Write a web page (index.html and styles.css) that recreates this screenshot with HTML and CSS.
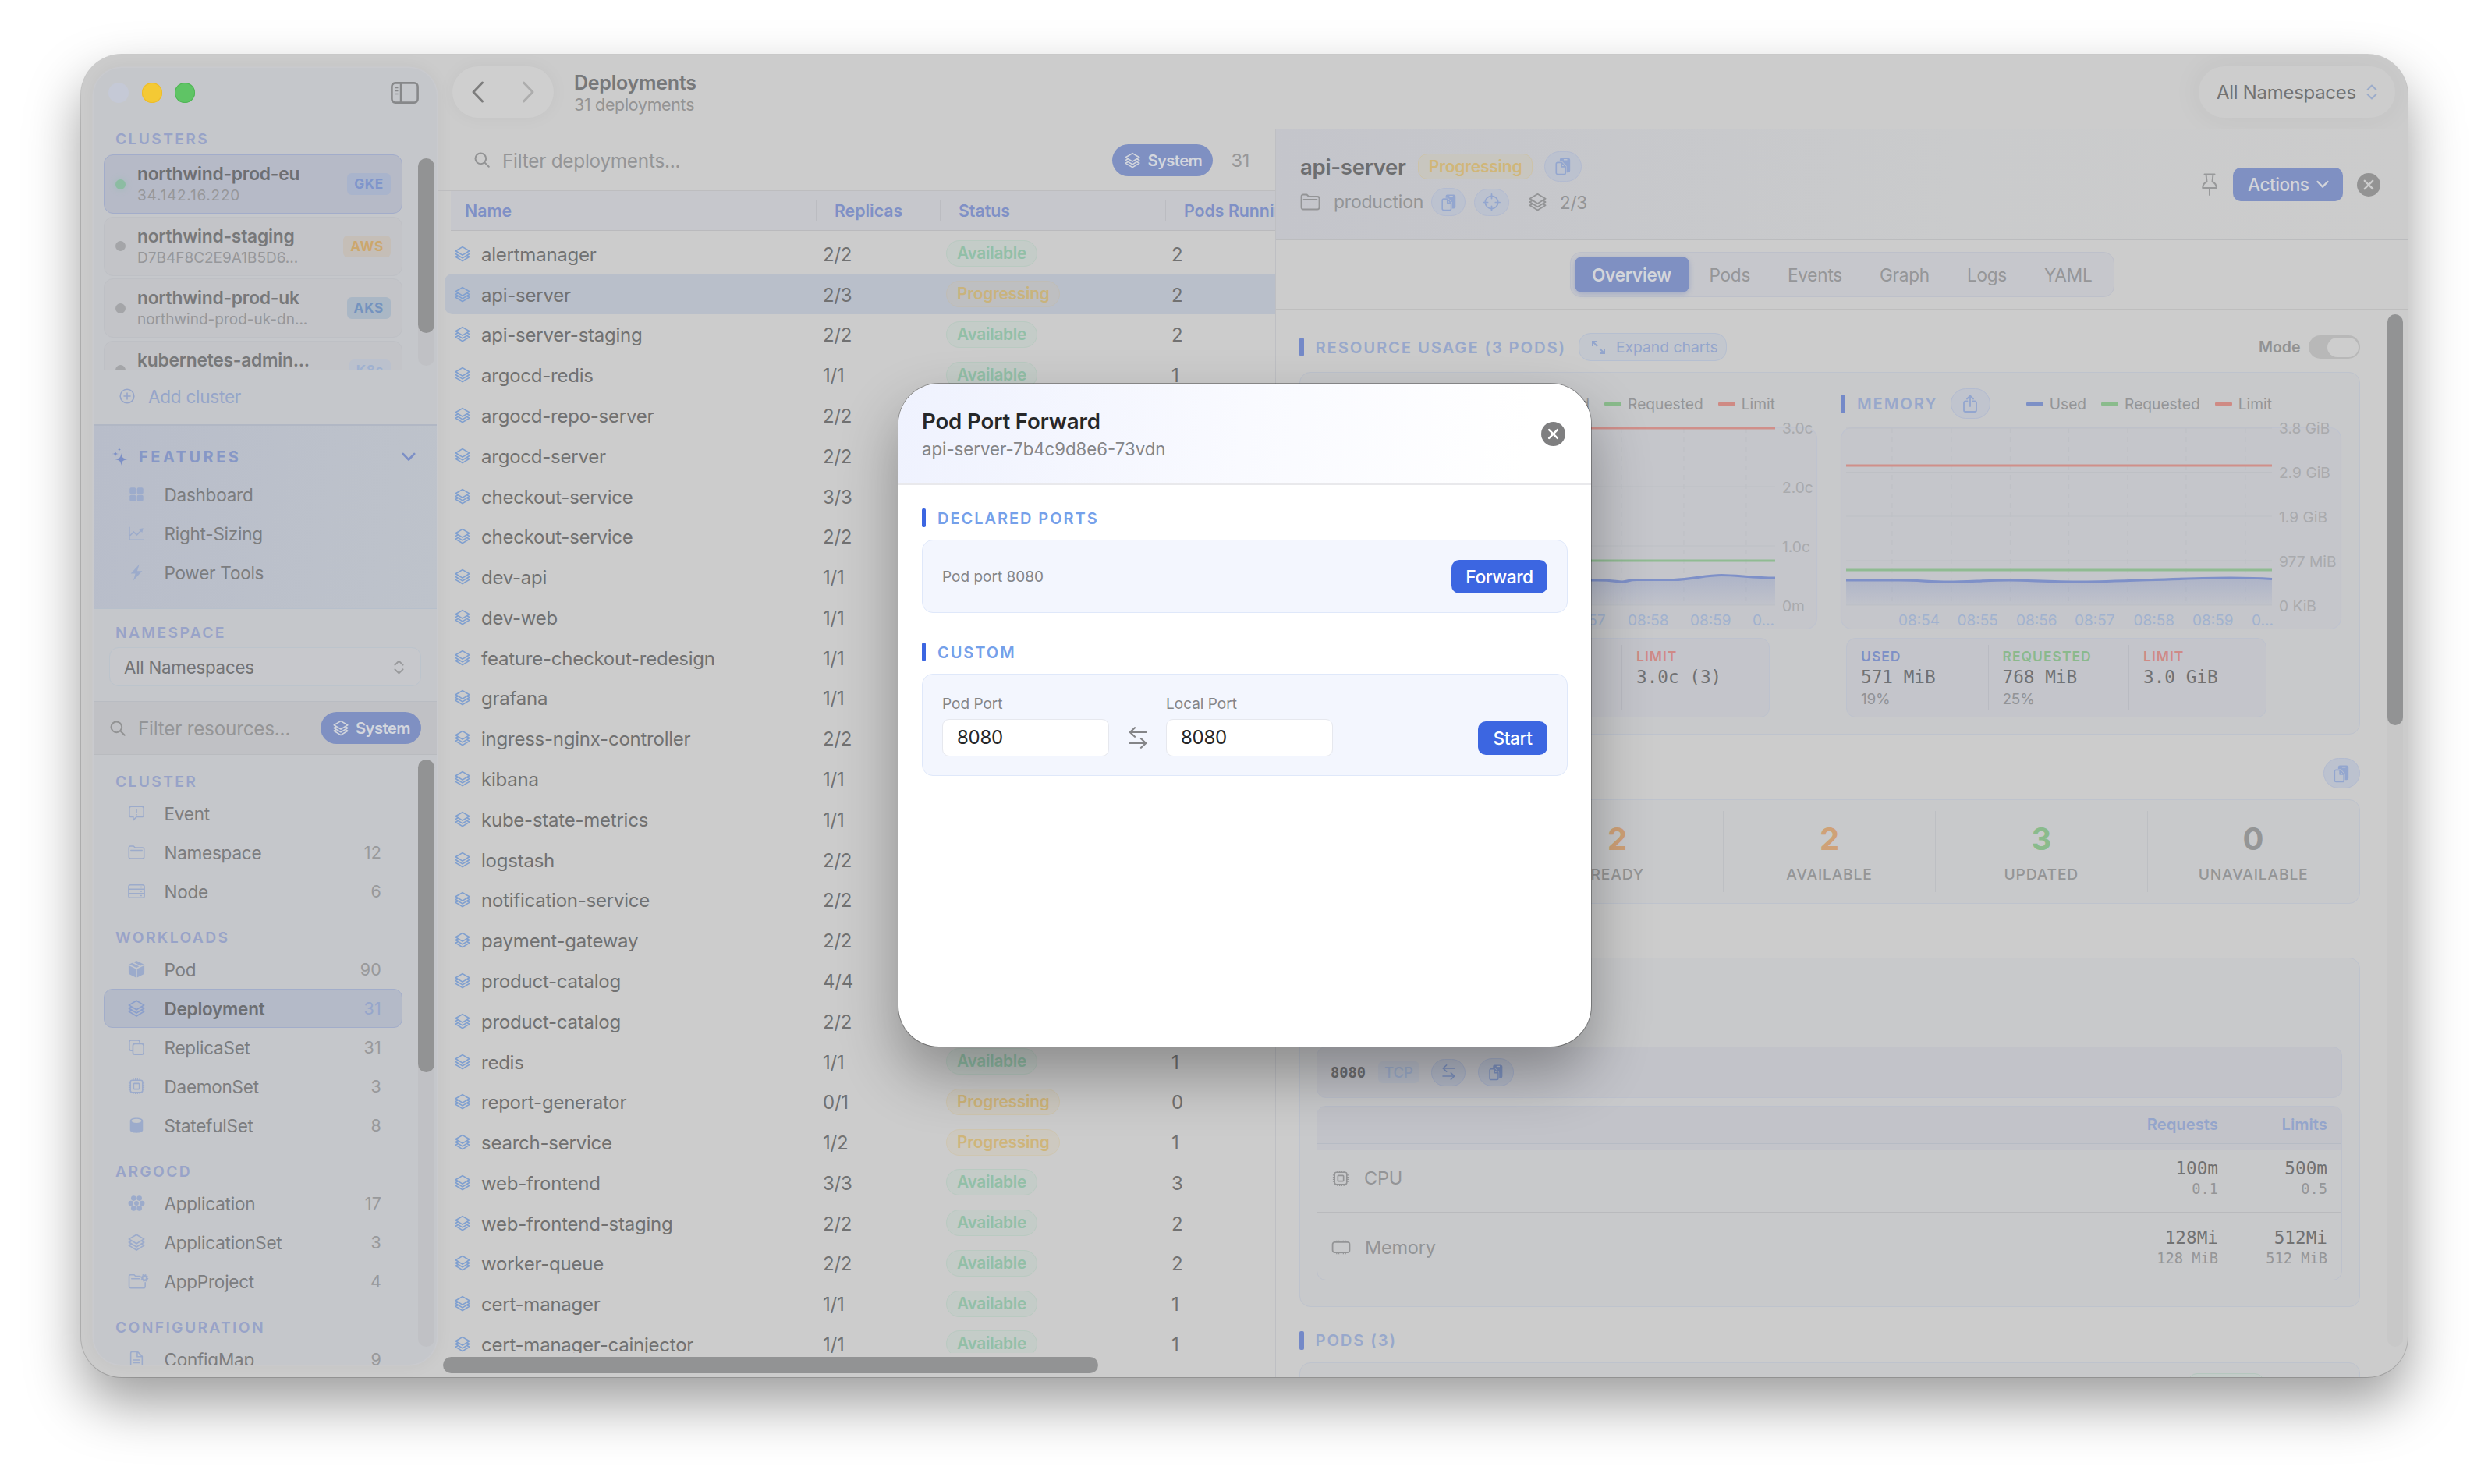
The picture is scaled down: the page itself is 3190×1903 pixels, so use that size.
FILE: index.html
```html
<!DOCTYPE html>
<html lang="en">
<head>
<meta charset="utf-8">
<title>Deployments</title>
<link rel="stylesheet" href="styles.css">
</head>
<body>
<svg class="defs" width="0" height="0" aria-hidden="true">
  <symbol id="layers" viewBox="0 0 24 24"><g fill="none" stroke="currentColor" stroke-width="1.900" stroke-linejoin="round" stroke-linecap="round"><path d="M12 1.300 22.500 7.500 12 14 1.500 7.500Z"/><path d="M4.500 10.300 1.500 12 12 18.500 22.500 12l-3-1.700"/><path d="M4.500 14.800 1.500 16.500 12 23 22.500 16.500l-3-1.700"/></g></symbol>
  <symbol id="search" viewBox="0 0 24 24"><g fill="none" stroke="currentColor" stroke-width="2.400" stroke-linecap="round"><circle cx="10" cy="10" r="8.200"/><path d="m16 16 6.500 6.500"/></g></symbol>
  <symbol id="updown" viewBox="0 0 14 20"><path d="M1.500 7 7 1.500 12.500 7M1.500 13 7 18.500 12.500 13" fill="none" stroke="currentColor" stroke-width="2" stroke-linecap="round" stroke-linejoin="round"/></symbol>
  <symbol id="copy" viewBox="0 0 24 26"><path d="M10 1.500h9a3 3 0 0 1 3 3V19a3 3 0 0 1-3 3h-2V13l-6-6.500H7.500V4a2.500 2.500 0 0 1 2.500-2.500Z" fill="currentColor"/><path d="M13 4h5" stroke="#bcc3d1" stroke-width="1.600"/><path d="M4.500 8H10l5.500 6v8.500a2 2 0 0 1-2 2h-9a2 2 0 0 1-2-2V10a2 2 0 0 1 2-2ZM10 8v6h5.500" fill="none" stroke="currentColor" stroke-width="1.800" stroke-linejoin="round"/></symbol>
  <symbol id="folder" viewBox="0 0 26 22"><path d="M1.500 18V4a2.500 2.500 0 0 1 2.500-2.500h4.500L11 4h11a2.500 2.500 0 0 1 2.500 2.500V18a2.500 2.500 0 0 1-2.500 2.500H4A2.500 2.500 0 0 1 1.500 18ZM4.500 8h17" fill="none" stroke="currentColor" stroke-width="1.800" stroke-linecap="round" stroke-linejoin="round"/></symbol>
  <symbol id="swap" viewBox="0 0 24 28"><path d="M22.500 7H2M8 1.200 1.800 7 8 12.800M1.500 21H22M16 15.200 22.200 21 16 26.800" fill="none" stroke="currentColor" stroke-width="2.200" stroke-linecap="round" stroke-linejoin="round"/></symbol>
  <symbol id="chip" viewBox="0 0 24 24"><g fill="none" stroke="currentColor" stroke-width="1.800"><rect x="3.500" y="3.500" width="17" height="17" rx="2.500"/><rect x="8" y="8" width="8" height="8" rx="1"/><path d="M7.500 1v2.500M10.500 1v2.500M13.500 1v2.500M16.500 1v2.500M7.500 20.500V23M10.500 20.500V23M13.500 20.500V23M16.500 20.500V23M1 7.500h2.500M1 10.500h2.500M1 13.500h2.500M1 16.500h2.500M20.500 7.500H23M20.500 10.500H23M20.500 13.500H23M20.500 16.500H23" stroke-width="1.300"/></g></symbol>
  <symbol id="memory" viewBox="0 0 26 20"><rect x="1.500" y="3" width="23" height="14" rx="3" fill="none" stroke="currentColor" stroke-width="1.900"/><path d="M7 .8V3M10 .8V3M13 .8V3M16 .8V3M19 .8V3M7 17v2.200M10 17v2.200M13 17v2.200M16 17v2.200M19 17v2.200" stroke="currentColor" stroke-width="1.300"/></symbol>
  <symbol id="target" viewBox="0 0 24 24"><g fill="none" stroke="currentColor" stroke-width="1.800" stroke-linecap="round"><circle cx="12" cy="12" r="8.500"/><path d="M12 .9v6M12 17v6M.9 12h6M17 12h6"/></g></symbol>
  <symbol id="close" viewBox="0 0 30 30"><circle cx="15" cy="15" r="15" fill="currentColor"/><path d="m9.800 9.800 10.400 10.400M20.200 9.800 9.800 20.200" stroke="var(--x, #cccccc)" stroke-width="2.400" stroke-linecap="round"/></symbol>
  <symbol id="down" viewBox="0 0 18 12"><path d="m1.800 2 7.200 7.500L16.200 2" fill="none" stroke="currentColor" stroke-width="2.600" stroke-linecap="round" stroke-linejoin="round"/></symbol>
</svg>

<div class="window">
  <aside class="sidebar">
    <div class="titlebar">
      <i class="light light-close"></i><i class="light light-min"></i><i class="light light-max"></i>
      <svg class="toggle-icon" viewBox="0 0 36 28"><rect x="1.400" y="1.400" width="33.200" height="25.200" rx="4.500" fill="none" stroke="currentColor" stroke-width="2.600"/><path d="M13 1v26" stroke="currentColor" stroke-width="2.400"/><path d="M5 7.500h4.500M5 11.500h4.500M5 15.500h4.500" stroke="currentColor" stroke-width="1.500"/></svg>
    </div>
    <h6 class="group-label clusters-label">CLUSTERS</h6>
    <div class="cluster-area">
      <div class="cluster-list">
        <div class="cluster is-active"><i class="dot"></i><div class="cluster-text"><b>northwind-prod-eu</b><span class="ip">34.142.16.220</span></div><em class="tag tag-gke">GKE</em></div>
        <div class="cluster"><i class="dot"></i><div class="cluster-text"><b>northwind-staging</b><span>D7B4F8C2E9A1B5D6...</span></div><em class="tag tag-aws">AWS</em></div>
        <div class="cluster"><i class="dot"></i><div class="cluster-text"><b>northwind-prod-uk</b><span>northwind-prod-uk-dn...</span></div><em class="tag tag-aks">AKS</em></div>
        <div class="cluster"><i class="dot"></i><div class="cluster-text"><b>kubernetes-admin...</b><span>&nbsp;</span></div><em class="tag tag-k8s">K8s</em></div>
      </div>
      <div class="track cluster-track"><div class="thumb cluster-thumb"></div></div>
    </div>
    <div class="add-cluster"><svg viewBox="0 0 20 20" width="20" height="20"><g fill="none" stroke="currentColor" stroke-width="1.600" stroke-linecap="round"><circle cx="10" cy="10" r="8.800"/><path d="M10 6v8M6 10h8"/></g></svg><span>Add cluster</span></div>

    <section class="features">
      <div class="features-head">
        <svg viewBox="0 0 20 24" width="20" height="24" fill="currentColor"><path d="M11.500 7c.8 5.500 2 7 8 8-6 1-7.200 2.500-8 8-.8-5.500-2-7-8-8 6-1 7.200-2.500 8-8ZM4 4.500C4.400 7 5 7.600 8 8c-3 .4-3.600 1-4 3.500C3.600 9 3 8.400 0 8c3-.4 3.600-1 4-3.500ZM9 .300c.2 1.500.5 1.900 2.200 2.200C9.500 2.800 9.200 3.200 9 4.700 8.800 3.200 8.500 2.800 6.800 2.500 8.500 2.200 8.800 1.800 9 .300Z"/></svg>
        <span>FEATURES</span>
        <svg class="features-chev" width="18" height="12"><use href="#down"/></svg>
      </div>
      <div class="nav-row"><svg class="nav-icon" viewBox="0 0 24 24" fill="currentColor"><rect x="2.500" y="2.500" width="8.700" height="8.700" rx="2"/><rect x="12.800" y="2.500" width="8.700" height="8.700" rx="2"/><rect x="2.500" y="12.800" width="8.700" height="8.700" rx="2"/><rect x="12.800" y="12.800" width="8.700" height="8.700" rx="2"/></svg><span>Dashboard</span></div>
      <div class="nav-row"><svg class="nav-icon" viewBox="0 0 24 24"><path d="M2 3v18h20M3 15l5-5 4.500 4L19 7.500" fill="none" stroke="currentColor" stroke-width="1.800"/><path d="m15 6 6.500-1.500L20 11Z" fill="currentColor"/></svg><span>Right-Sizing</span></div>
      <div class="nav-row"><svg class="nav-icon" viewBox="0 0 24 24" fill="currentColor"><path d="M16 .5 4 13.500h6.500L7.500 23.500 20 10h-7Z"/></svg><span>Power Tools</span></div>
    </section>

    <section class="namespace">
      <h6 class="group-label">NAMESPACE</h6>
      <div class="select"><span>All Namespaces</span><svg width="13" height="19"><use href="#updown"/></svg></div>
    </section>

    <div class="resource-filter">
      <svg class="gray-icon" width="20" height="20"><use href="#search"/></svg>
      <span class="placeholder">Filter resources...</span>
      <span class="system-pill"><svg width="20" height="21"><use href="#layers"/></svg>System</span>
    </div>

    <div class="nav-area">
      <nav class="nav-list">
        <h6 class="group-label">CLUSTER</h6>
        <div class="nav-row"><svg class="nav-icon" viewBox="0 0 24 24"><path d="M4.500 2.500h15a2.500 2.500 0 0 1 2.500 2.500v9.500a2.500 2.500 0 0 1-2.500 2.500H12l-4.500 4.500V17h-3A2.500 2.500 0 0 1 2 14.500V5a2.500 2.500 0 0 1 2.500-2.500ZM12 5.800v5.400M12 13v1.800" fill="none" stroke="currentColor" stroke-width="1.700" stroke-linejoin="round"/></svg><span>Event</span></div>
        <div class="nav-row"><svg class="nav-icon"><use href="#folder"/></svg><span>Namespace</span><small>12</small></div>
        <div class="nav-row"><svg class="nav-icon" viewBox="0 0 24 24"><g fill="none" stroke="currentColor" stroke-width="1.700"><rect x="1" y="3" width="22" height="18" rx="2.500"/><path d="M1 9h22M1 15h22"/></g><path d="M17 6h2.500M17 12h2.500M17 18h2.500" stroke="currentColor" stroke-width="1.700"/></svg><span>Node</span><small>6</small></div>
        <h6 class="group-label">WORKLOADS</h6>
        <div class="nav-row"><svg class="nav-icon" viewBox="0 0 24 24" fill="currentColor"><path d="m1 6.500 10.200 5V23.500L2.500 19A2.500 2.500 0 0 1 1 16.500ZM23 6.500l-10.200 5V23.500L21.500 19a2.500 2.500 0 0 0 1.500-2.500ZM2 5 5.800 3l9.900 4.900L12 9.900ZM7.800 2 12 0l10 5-4.300 2Z"/></svg><span>Pod</span><small>90</small></div>
        <div class="nav-row is-active"><svg class="nav-icon"><use href="#layers"/></svg><span>Deployment</span><small>31</small></div>
        <div class="nav-row"><svg class="nav-icon" viewBox="0 0 24 24"><g fill="none" stroke="currentColor" stroke-width="1.800"><rect x="7" y="7" width="15" height="15" rx="3"/><path d="M7 16.500H4.500A2.500 2.500 0 0 1 2 14V4.500A2.500 2.500 0 0 1 4.500 2H14a2.500 2.500 0 0 1 2.500 2.500V7"/></g></svg><span>ReplicaSet</span><small>31</small></div>
        <div class="nav-row"><svg class="nav-icon"><use href="#chip"/></svg><span>DaemonSet</span><small>3</small></div>
        <div class="nav-row"><svg class="nav-icon" viewBox="0 0 24 24"><path d="M3 5.500v13C3 21 6.500 22.500 12 22.500s9-1.500 9-4v-13C21 3 17.500 1.500 12 1.500S3 3 3 5.500Z" fill="currentColor"/><ellipse cx="12" cy="5.800" rx="7" ry="2.800" fill="#c5c7cb"/></svg><span>StatefulSet</span><small>8</small></div>
        <h6 class="group-label">ARGOCD</h6>
        <div class="nav-row"><svg class="nav-icon" viewBox="0 0 24 24" fill="currentColor"><circle cx="12" cy="12" r="3.200"/><circle cx="4.200" cy="12" r="3.600"/><circle cx="19.800" cy="12" r="3.600"/><circle cx="8" cy="5" r="3.600"/><circle cx="16" cy="5" r="3.600"/><circle cx="8" cy="19" r="3.600"/><circle cx="16" cy="19" r="3.600"/></svg><span>Application</span><small>17</small></div>
        <div class="nav-row"><svg class="nav-icon"><use href="#layers"/></svg><span>ApplicationSet</span><small>3</small></div>
        <div class="nav-row"><svg class="nav-icon nav-icon-wide" viewBox="0 0 28 24"><path d="M17 5H10.500L8.500 3H3.500A2 2 0 0 0 1.500 5v14a2.500 2.500 0 0 0 2.500 2.500h17.500a2.500 2.500 0 0 0 2.500-2.500v-5M5 8.500h11" fill="none" stroke="currentColor" stroke-width="1.700" stroke-linecap="round"/><circle cx="23" cy="7.500" r="3.200" fill="none" stroke="currentColor" stroke-width="2.600"/><circle cx="23" cy="7.500" r="4.800" fill="none" stroke="currentColor" stroke-width="1.200" stroke-dasharray="1.900 1.870"/></svg><span>AppProject</span><small>4</small></div>
        <h6 class="group-label">CONFIGURATION</h6>
        <div class="nav-row"><svg class="nav-icon" viewBox="0 0 24 24"><path d="M6 1.500h7.500L20 8v12a2.500 2.500 0 0 1-2.500 2.500h-11A2.500 2.500 0 0 1 4 20V3.500a2 2 0 0 1 2-2ZM13 2v6.500h7M7.500 13h9M7.500 17h9" fill="none" stroke="currentColor" stroke-width="1.700"/></svg><span>ConfigMap</span><small>9</small></div>
      </nav>
      <div class="track nav-track"><div class="thumb nav-thumb"></div></div>
    </div>
  </aside>

  <main class="main">
    <header class="toolbar">
      <div class="history">
        <svg width="17" height="28" viewBox="0 0 17 28"><path d="M14.500 2 3 14l11.500 12" fill="none" stroke="#7d7d7d" stroke-width="3" stroke-linecap="round" stroke-linejoin="round"/></svg>
        <svg width="17" height="28" viewBox="0 0 17 28"><path d="M2.500 2 14 14 2.500 26" fill="none" stroke="#adadad" stroke-width="3" stroke-linecap="round" stroke-linejoin="round"/></svg>
      </div>
      <div class="heading"><h1>Deployments</h1><p>31 deployments</p></div>
      <div class="ns-picker"><span>All Namespaces</span><svg width="14" height="20"><use href="#updown"/></svg></div>
    </header>

    <div class="panes">
      <section class="list-pane">
        <div class="list-filter">
          <svg class="gray-icon" width="20" height="20"><use href="#search"/></svg>
          <span class="placeholder">Filter deployments...</span>
          <span class="system-pill"><svg width="20" height="21"><use href="#layers"/></svg>System</span>
          <span class="list-count">31</span>
        </div>
        <div class="columns"><span>Name</span><span>Replicas</span><span>Status</span><span>Pods Running</span></div>
        <div class="rows">
          <div class="row"><svg><use href="#layers"/></svg><span>alertmanager</span><span>2/2</span><em>Available</em><span>2</span></div>
          <div class="row is-active"><svg><use href="#layers"/></svg><span>api-server</span><span>2/3</span><em class="warn">Progressing</em><span>2</span></div>
          <div class="row"><svg><use href="#layers"/></svg><span>api-server-staging</span><span>2/2</span><em>Available</em><span>2</span></div>
          <div class="row"><svg><use href="#layers"/></svg><span>argocd-redis</span><span>1/1</span><em>Available</em><span>1</span></div>
          <div class="row"><svg><use href="#layers"/></svg><span>argocd-repo-server</span><span>2/2</span><em>Available</em><span>2</span></div>
          <div class="row"><svg><use href="#layers"/></svg><span>argocd-server</span><span>2/2</span><em>Available</em><span>2</span></div>
          <div class="row"><svg><use href="#layers"/></svg><span>checkout-service</span><span>3/3</span><em>Available</em><span>3</span></div>
          <div class="row"><svg><use href="#layers"/></svg><span>checkout-service</span><span>2/2</span><em>Available</em><span>2</span></div>
          <div class="row"><svg><use href="#layers"/></svg><span>dev-api</span><span>1/1</span><em>Available</em><span>1</span></div>
          <div class="row"><svg><use href="#layers"/></svg><span>dev-web</span><span>1/1</span><em>Available</em><span>1</span></div>
          <div class="row"><svg><use href="#layers"/></svg><span>feature-checkout-redesign</span><span>1/1</span><em>Available</em><span>1</span></div>
          <div class="row"><svg><use href="#layers"/></svg><span>grafana</span><span>1/1</span><em>Available</em><span>1</span></div>
          <div class="row"><svg><use href="#layers"/></svg><span>ingress-nginx-controller</span><span>2/2</span><em>Available</em><span>2</span></div>
          <div class="row"><svg><use href="#layers"/></svg><span>kibana</span><span>1/1</span><em>Available</em><span>1</span></div>
          <div class="row"><svg><use href="#layers"/></svg><span>kube-state-metrics</span><span>1/1</span><em>Available</em><span>1</span></div>
          <div class="row"><svg><use href="#layers"/></svg><span>logstash</span><span>2/2</span><em>Available</em><span>2</span></div>
          <div class="row"><svg><use href="#layers"/></svg><span>notification-service</span><span>2/2</span><em>Available</em><span>2</span></div>
          <div class="row"><svg><use href="#layers"/></svg><span>payment-gateway</span><span>2/2</span><em>Available</em><span>2</span></div>
          <div class="row"><svg><use href="#layers"/></svg><span>product-catalog</span><span>4/4</span><em>Available</em><span>4</span></div>
          <div class="row"><svg><use href="#layers"/></svg><span>product-catalog</span><span>2/2</span><em>Available</em><span>2</span></div>
          <div class="row"><svg><use href="#layers"/></svg><span>redis</span><span>1/1</span><em>Available</em><span>1</span></div>
          <div class="row"><svg><use href="#layers"/></svg><span>report-generator</span><span>0/1</span><em class="warn">Progressing</em><span>0</span></div>
          <div class="row"><svg><use href="#layers"/></svg><span>search-service</span><span>1/2</span><em class="warn">Progressing</em><span>1</span></div>
          <div class="row"><svg><use href="#layers"/></svg><span>web-frontend</span><span>3/3</span><em>Available</em><span>3</span></div>
          <div class="row"><svg><use href="#layers"/></svg><span>web-frontend-staging</span><span>2/2</span><em>Available</em><span>2</span></div>
          <div class="row"><svg><use href="#layers"/></svg><span>worker-queue</span><span>2/2</span><em>Available</em><span>2</span></div>
          <div class="row"><svg><use href="#layers"/></svg><span>cert-manager</span><span>1/1</span><em>Available</em><span>1</span></div>
          <div class="row"><svg><use href="#layers"/></svg><span>cert-manager-cainjector</span><span>1/1</span><em>Available</em><span>1</span></div>
        </div>
        <div class="h-scroll"><div class="thumb h-thumb"></div></div>
      </section>

      <section class="detail">
        <header class="detail-head">
          <div class="detail-info">
            <div class="detail-title"><h2>api-server</h2><em class="status-pill">Progressing</em><span class="round round-lg"><svg width="22" height="24"><use href="#copy"/></svg></span></div>
            <div class="detail-meta">
              <svg width="26" height="22"><use href="#folder"/></svg><span class="meta-ns">production</span>
              <span class="round round-copy"><svg width="21" height="23"><use href="#copy"/></svg></span>
              <span class="round round-target"><svg width="23" height="23"><use href="#target"/></svg></span>
              <svg class="meta-layers" width="23" height="24"><use href="#layers"/></svg><span class="meta-count">2/3</span>
            </div>
          </div>
          <svg class="pin" viewBox="0 0 20 29" width="20" height="29"><path d="M3.500 1.500h13M5.500 1.500l1 9.500C3 12.500 1.300 15 1.200 19h17.600c-.1-4-1.800-6.500-5.300-8l1-9.500M10 19v9" fill="none" stroke="currentColor" stroke-width="2" stroke-linecap="round" stroke-linejoin="round"/></svg>
          <span class="actions">Actions<svg width="16" height="11"><use href="#down"/></svg></span>
          <svg class="detail-close" width="30" height="30"><use href="#close"/></svg>
        </header>
        <div class="tabs-bar"><div class="tabs"><b>Overview</b><span>Pods</span><span>Events</span><span>Graph</span><span>Logs</span><span>YAML</span></div></div>
        <div class="detail-scroll">
          <div class="detail-body">
            <div class="sec sec-usage"><i class="bar"></i><h3>RESOURCE USAGE (3 PODS)</h3>
              <span class="expand"><svg width="19" height="19" viewBox="0 0 19 19"><path d="M2 8V2h6M2 2l6 6M17 11v6h-6M17 17l-6-6" fill="none" stroke="currentColor" stroke-width="2"/></svg>Expand charts</span>
              <span class="mode">Mode</span><span class="switch"><i></i></span>
            </div>
            <div class="card charts">
              <div class="chart-col">
                <div class="chart-head"><i class="bar"></i><h3>CPU</h3><span class="round round-share"></span>
                  <ul class="legend"><li class="c-used">Used</li><li class="c-req">Requested</li><li class="c-lim">Limit</li></ul></div>
                <svg class="chart" viewBox="0 0 642 259" width="642" height="259">
                  <defs><linearGradient id="fade" x1="0" y1="0" x2="0" y2="1"><stop offset="0" stop-color="#7f90c2" stop-opacity=".34"/><stop offset="1" stop-color="#7f90c2" stop-opacity=".06"/></linearGradient></defs>
                  <rect class="frame" x=".5" y=".5" width="641" height="258" rx="14"/>
                  <g class="grid"><path d="M7 1h581M7 76h581M7 152h581M7 228h581"/></g>
                  <path class="gridv" d="M71 1v227M151 1v227M231 1v227M311 1v227M391 1v227M471 1v227M551 1v227"/>
                  <path d="M7 196H360C380 196 385 198 392 198S400 195.500 410 195.500H458C480 195 500 189.500 519 189.500S560 193 588 193V228H7Z" fill="url(#fade)"/>
                  <path class="l-lim" d="M7 1h581"/><path class="l-req" d="M7 171h581"/>
                  <path class="l-used" d="M7 196H360C380 196 385 198 392 198S400 195.500 410 195.500H458C480 195 500 189.500 519 189.500S560 193 588 193"/>
                  <g class="ylab"><text x="597" y="8">3.0c</text><text x="597" y="83.500">2.0c</text><text x="597" y="159.500">1.0c</text><text x="597" y="235.500">0m</text></g>
                  <g class="xlab"><text x="319" y="254">08:57</text><text x="399" y="254">08:58</text><text x="479" y="254">08:59</text><text x="559" y="254">0...</text></g>
                </svg>
                <div class="stats stats-cpu"><div><h4 class="t-used">USED</h4><b>0.4c</b><small>14%</small></div><div><h4 class="t-req">REQUESTED</h4><b>0.8c (.75)</b></div><div><h4 class="t-lim">LIMIT</h4><b>3.0c (3)</b></div></div>
              </div>
              <div class="chart-col">
                <div class="chart-head"><i class="bar"></i><h3>MEMORY</h3><span class="round round-share"><svg width="20" height="24" viewBox="0 0 20 24"><path d="M6.500 8.500H4a2 2 0 0 0-2 2V20a2 2 0 0 0 2 2h12a2 2 0 0 0 2-2v-9.500a2 2 0 0 0-2-2h-2.500M10 15V1.500M6 5.500l4-4 4 4" fill="none" stroke="currentColor" stroke-width="1.800" stroke-linecap="round" stroke-linejoin="round"/></svg></span>
                  <ul class="legend"><li class="c-used">Used</li><li class="c-req">Requested</li><li class="c-lim">Limit</li></ul></div>
                <svg class="chart" viewBox="0 0 642 259" width="642" height="259">
                  <rect class="frame" x=".5" y=".5" width="641" height="258" rx="14"/>
                  <g class="grid"><path d="M7 1h546M7 57.500h546M7 114h546M7 171h546M7 228h546"/></g>
                  <path class="gridv" d="M66 1v227M142 1v227M217.500 1v227M292.500 1v227M368 1v227M443 1v227M519 1v227"/>
                  <path d="M7 196H75C100 196 115 198 138 198S190 196 216 196 265 198 310 198 440 193 500 193Q530 193 553 194.500V228H7Z" fill="url(#fade)"/>
                  <path class="l-lim" d="M7 49h546"/><path class="l-req" d="M7 183h546"/>
                  <path class="l-used" d="M7 196H75C100 196 115 198 138 198S190 196 216 196 265 198 310 198 440 193 500 193Q530 193 553 194.500"/>
                  <g class="ylab"><text x="562" y="8">3.8 GiB</text><text x="562" y="64.500">2.9 GiB</text><text x="562" y="121.500">1.9 GiB</text><text x="562" y="178.500">977 MiB</text><text x="562" y="235.500">0 KiB</text></g>
                  <g class="xlab"><text x="74" y="254">08:54</text><text x="149.500" y="254">08:55</text><text x="225" y="254">08:56</text><text x="300" y="254">08:57</text><text x="375.500" y="254">08:58</text><text x="451" y="254">08:59</text><text x="527" y="254">0...</text></g>
                </svg>
                <div class="stats"><div><h4 class="t-used">USED</h4><b>571 MiB</b><small>19%</small></div><div><h4 class="t-req">REQUESTED</h4><b>768 MiB</b><small>25%</small></div><div><h4 class="t-lim">LIMIT</h4><b>3.0 GiB</b></div></div>
              </div>
            </div>

            <div class="sec sec-status"><i class="bar"></i><h3>STATUS</h3><span class="round round-status"><svg width="22" height="24"><use href="#copy"/></svg></span></div>
            <div class="card counts">
              <div><b class="n-green">3</b><span>DESIRED</span></div><div><b class="n-orange">2</b><span>READY</span></div><div><b class="n-orange">2</b><span>AVAILABLE</span></div><div><b class="n-green">3</b><span>UPDATED</span></div><div><b>0</b><span>UNAVAILABLE</span></div>
            </div>

            <div class="sec sec-containers"><i class="bar"></i><h3>CONTAINERS</h3></div>
            <div class="card container-card">
              <div class="port"><b>8080</b><span class="tcp">TCP</span><span class="round round-swap"><svg width="19" height="20"><use href="#swap"/></svg></span><span class="round round-port"><svg width="20" height="22"><use href="#copy"/></svg></span></div>
              <div class="limits">
                <div class="limits-head"><span></span><span>Requests</span><span>Limits</span></div>
                <div class="limits-row"><span class="res"><svg width="24" height="22"><use href="#chip"/></svg>CPU</span><span><b>100m</b><small>0.1</small></span><span><b>500m</b><small>0.5</small></span></div>
                <div class="limits-row"><span class="res res-mem"><svg width="25" height="19"><use href="#memory"/></svg>Memory</span><span><b>128Mi</b><small>128 MiB</small></span><span><b>512Mi</b><small>512 MiB</small></span></div>
              </div>
            </div>

            <div class="sec sec-pods"><i class="bar"></i><h3>PODS (3)</h3></div>
            <div class="card pods-card"><em></em></div>
          </div>
          <div class="track detail-track"><div class="thumb detail-thumb"></div></div>
        </div>
      </section>
    </div>
  </main>
</div>

<div class="modal" role="dialog">
  <header class="modal-head"><div><h2>Pod Port Forward</h2><p>api-server-7b4c9d8e6-73vdn</p></div><svg class="modal-close" width="31" height="31"><use href="#close"/></svg></header>
  <div class="modal-sec"><i></i><h3>DECLARED PORTS</h3></div>
  <div class="modal-card declared"><span>Pod port 8080</span><button>Forward</button></div>
  <div class="modal-sec custom-sec"><i></i><h3>CUSTOM</h3></div>
  <div class="modal-card custom">
    <label>Pod Port<span class="input">8080</span></label>
    <svg class="swap" width="24" height="28"><use href="#swap"/></svg>
    <label>Local Port<span class="input">8080</span></label>
    <button class="start">Start</button>
  </div>
</div>
</body>
</html>
```
FILE: styles.css
```css
* { box-sizing: border-box; margin: 0; padding: 0; }
body { position: relative; width: 3190px; height: 1903px; overflow: hidden; background: #fff; font-family: Inter, "Liberation Sans", sans-serif; font-size: 23.500px; color: #6f7071; letter-spacing: -.01em; white-space: nowrap; }
em, i { font-style: normal; }
svg { display: block; flex: none; overflow: visible; }
.defs { position: absolute; }

.window { display: flex; width: 2983px; height: 1696px; margin: 70px 0 0 104px; border-radius: 52px; overflow: hidden; background: #ccc; box-shadow: 0 0 0 1px rgba(0,0,0,.16), 0 34px 70px rgba(0,0,0,.385); }

/* sidebar */
.sidebar { flex: none; display: flex; flex-direction: column; width: 440px; height: 1663px; margin: 17px 0 16px 16px; border-radius: 36px; overflow: hidden; background: #c5c7cb; box-shadow: 0 0 0 1.500px #c9cace, 0 0 24px rgba(0,0,0,.05); }
.titlebar { display: flex; align-items: center; height: 63px; flex: none; padding: 0 23px 0 19px; gap: 16.500px; }
.light { width: 26px; height: 26px; border-radius: 50%; }
.light-close { background: #c5c9d6; }
.light-min { background: #f4c934; box-shadow: inset 0 0 0 1px #edbb2a; }
.light-max { background: #5fc465; box-shadow: inset 0 0 0 1px #50b556; }
.toggle-icon { width: 36px; height: 28px; margin-left: auto; color: #87888a; }
.group-label { font-size: 19.300px; font-weight: 600; letter-spacing: 2.350px; color: #98a3c8; line-height: 24px; padding-left: 28px; }
.clusters-label { margin: 16px 0 8px; }
.cluster-area { display: flex; height: 277px; flex: none; padding-left: 13px; }
.cluster-list { width: 383px; height: 277px; overflow: hidden; display: flex; flex-direction: column; gap: 3.500px; }
.cluster { flex: none; display: flex; align-items: center; height: 76px; border: 1.500px solid #bec0c5; border-radius: 12px; padding: 0 14px; background: #c3c4c8; }
.cluster.is-active { background: #b6bac7; border-color: #a2acca; }
.dot { width: 13px; height: 13px; border-radius: 50%; background: #a4a5a8; margin-right: 15px; }
.is-active .dot { background: #8cbca2; box-shadow: 0 0 8px #9fbcb8; }
.cluster-text { display: flex; flex-direction: column; padding-top: 1px; }
.cluster-text b { font-size: 22.800px; font-weight: 600; line-height: 28px; color: #77787a; }
.cluster-text span { font-size: 19px; line-height: 27px; color: #96979a; letter-spacing: 0; }
.cluster-text .ip { letter-spacing: .04em; }
.is-active b { color: #6d6f73; }
.tag { margin-left: auto; height: 28px; line-height: 28px; border-radius: 6px; padding: 0 9px; font-size: 17.200px; font-weight: 700; letter-spacing: .7px; }
.tag-gke { background: #a9b4cc; color: #7f95cb; }
.tag-aws { background: #c5beb7; color: #cca76d; }
.tag-aks { background: #aab7c5; color: #7493bf; }
.tag-k8s { background: #bbc1cd; color: #9fb1d0; }
.track { background: #c0c1c5; border-radius: 11px; }
.thumb { background: #929394; border-radius: 11px; }
.cluster-track { width: 21px; height: 266px; margin: 5px 0 0 20px; }
.cluster-thumb { height: 224px; }
.add-cluster { display: flex; align-items: center; height: 69px; padding: 0 0 3px 33px; gap: 17px; flex: none; color: #96a5c9; font-size: 22.500px; }

.features { flex: none; height: 237px; border-top: 2px solid #b1b7c4; border-bottom: 1.500px solid #b6bfcb; background: linear-gradient(100deg, #b8bdca, #bec3cb); padding-top: 17px; }
.features-head { display: flex; align-items: center; height: 46px; padding: 0 27px 0 24px; color: #7c8fc6; }
.features-head span { margin-left: 14px; font-size: 20px; font-weight: 700; letter-spacing: 3.500px; color: #8697c6; }
.features-chev { margin-left: auto; }
.nav-row { display: flex; align-items: center; height: 50px; width: 383px; margin-left: 13px; padding: 0 26px 0 30px; border: 1.500px solid transparent; border-radius: 11px; font-size: 22.500px; color: #7c7d7f; }
.nav-icon { width: 22px; height: 22px; margin-right: 24.500px; color: #9cabcb; }
.nav-icon-wide { width: 26px; margin-right: 20.500px; }
.nav-row small { margin-left: auto; font-size: 21.500px; color: #98999b; letter-spacing: .2px; }
.nav-row.is-active { background: #b4bac8; border-color: #a2adca; color: #6d6f73; }
.nav-row.is-active span { font-weight: 600; }
.nav-row.is-active small { color: #96a6cb; }
.nav-row.is-active .nav-icon { color: #8b9fcb; }

.namespace { flex: none; height: 118px; padding-top: 18px; }
.select { display: flex; align-items: center; justify-content: space-between; width: 400px; height: 50px; margin: 7px 0 0 20px; padding: 0 21px 0 18px; border: 1.500px solid #bcc4cc; border-radius: 12px; background: #c7c8cc; color: #727375; font-size: 22.300px; }
.select svg { color: #98999b; }
.resource-filter { flex: none; display: flex; align-items: center; height: 69px; padding: 0 20px 0 21px; background: #c0c1c5; border-top: 1.500px solid #b9bcc2; border-bottom: 1.500px solid #b9bbbf; }
.gray-icon { color: #929394; }
.placeholder { margin-left: 16px; font-size: 24.300px; color: #949597; }
.system-pill { display: flex; align-items: center; gap: 9px; margin-left: auto; width: 129px; height: 41px; padding-left: 16px; border-radius: 21px; background: #7f90c2; color: #d3d6dd; font-size: 20.300px; font-weight: 600; letter-spacing: -.03em; }
.nav-area { display: flex; flex: 1; min-height: 0; }
.nav-list { width: 396px; overflow: hidden; height: 782px; }
.nav-list .group-label { height: 50px; padding-top: 22px; }
.nav-track { width: 21px; height: 753px; margin: 6px 0 0 20px; }
.nav-thumb { height: 401px; }

/* toolbar */
.main { flex: 1; margin-left: 2px; min-width: 0; display: flex; flex-direction: column; }
.toolbar { flex: none; display: flex; align-items: center; height: 96px; border-bottom: 1.500px solid #bcbcbc; padding: 0 16px 0 18px; }
.history { display: flex; align-items: center; justify-content: space-between; width: 130px; height: 66px; padding: 0 24px; border-radius: 33px; background: #cfcfcf; box-shadow: 0 0 24px rgba(0,0,0,.04); }
.heading { margin-left: 26px; padding-top: 3px; }
.heading h1 { font-size: 25px; font-weight: 600; line-height: 29px; color: #77787a; }
.heading p { font-size: 21.300px; line-height: 26px; color: #949494; }
.ns-picker { display: flex; align-items: center; gap: 13px; margin-left: auto; width: 252px; height: 66px; padding-left: 23px; border-radius: 33px; background: #cdcdcd; box-shadow: 0 0 40px rgba(0,0,0,.06); color: #727272; font-size: 23.900px; }
.ns-picker span { padding-top: 1px; }
.ns-picker svg { color: #9cacca; }
.panes { flex: 1; display: flex; min-height: 0; }

/* list */
.list-pane { flex: none; display: flex; flex-direction: column; width: 1073px; }
.list-filter { flex: none; display: flex; align-items: center; height: 79px; padding: 0 33px 0 46px; border-bottom: 1.500px solid #bdbdbf; }
.list-filter .placeholder { padding-top: 1px; }
.list-count { margin-left: 23px; font-size: 23.500px; color: #989898; }
.columns { flex: none; display: grid; grid-template-columns: 474px 159px 289px 135px; align-items: center; height: 51px; margin-left: 16px; background: #c6c7cc; border-bottom: 1.500px solid #bababd; font-size: 21.300px; font-weight: 600; color: #7f90c6; overflow: hidden; letter-spacing: 0; }
.columns span { line-height: 26px; padding-left: 18px; }
.columns span + span { border-left: 1.500px solid #bbbcc1; margin-left: -6px; padding-left: 23px; }
.rows { flex: none; height: 1439px; padding-top: 3.500px; overflow: hidden; }
.row { display: grid; grid-template-columns: 34px 438px 158px 289px 1fr; align-items: center; height: 51.790px; padding-left: 13px; margin-left: 8px; color: #717171; font-size: 24px; }
.row > span { padding-top: 2px; }
.row svg { width: 20px; height: 21px; color: #7f9fcf; }
.row.is-active { background: #b9bfca; border-radius: 10px 0 0 10px; }
.row em { justify-self: start; height: 34px; line-height: 32px; padding: 0 13px; border: 1.500px solid #b9cac1; border-radius: 17px; background: #c4ccc8; color: #92bfa7; font-size: 20.800px; font-weight: 600; }
.row em.warn { background: #cdc9c0; border-color: #cfc6b0; color: #cfb57a; }
.row.is-active em.warn { background: #bebfc1; border-color: #c0bdb6; color: #c9b37c; }
.h-scroll { flex: 1; padding: 5px 0 0 6px; }
.h-thumb { width: 840px; height: 20.500px; }

/* detail */
.detail { flex: 1; min-width: 0; display: flex; flex-direction: column; border-left: 1.500px solid #bebfc3; }
.detail-head { flex: none; display: flex; align-items: center; height: 142px; padding: 0 35px 0 31px; border-bottom: 1.500px solid #bbbcbe; background: linear-gradient(90deg, #c4c5cb, #cacbcc 60%, #ccc); }
.detail-info { flex: 1; }
.detail-title { display: flex; align-items: center; height: 40px; margin-top: 1px; }
.detail-title h2 { font-size: 27.500px; font-weight: 600; color: #6d6e70; letter-spacing: -.01em; width: 151px; padding-top: 1px; }
.status-pill { width: 147px; height: 33px; line-height: 31px; text-align: center; border: 1.500px solid #cdc3a8; border-radius: 12px; background: #c8c6bf; color: #d0b679; font-size: 21px; font-weight: 600; }
.round { display: flex; align-items: center; justify-content: center; border-radius: 20px; background: #bcc2cf; border: 1.500px solid #b3bbd0; color: #93a6cf; flex: none; }
.round-lg { width: 48px; height: 39px; margin-left: 15px; }
.detail-meta { display: flex; align-items: center; height: 44px; margin-top: 4px; color: #939496; }
.meta-ns { width: 125px; margin-left: 17px; font-size: 23px; }
.round-copy { width: 44px; height: 36px; }
.round-target { width: 45px; height: 35px; margin-left: 11px; }
.meta-layers { margin-left: 25px; }
.meta-count { margin-left: 17px; font-size: 22.500px; }
.pin { color: #98999a; margin-right: 20px; }
.actions { display: flex; align-items: center; gap: 9px; width: 141px; height: 43px; padding-left: 19px; border-radius: 10px; background: #7f90c2; color: #d3d5da; font-size: 22.600px; font-weight: 500; letter-spacing: -.02em; }
.detail-close { color: #939393; margin-left: 18px; }
.tabs-bar { flex: none; display: flex; justify-content: center; align-items: center; height: 89px; border-bottom: 1.500px solid #bebebe; }
.tabs { display: flex; justify-content: space-between; width: 698px; height: 58px; padding: 4.500px 5px; border: 1.500px solid #bdc0ca; border-radius: 14px; background: #c6c7cc; font-size: 22.600px; color: #959698; }
.tabs > * { padding: 0 22px; line-height: 47px; flex: none; }
.tabs b { width: 147px; height: 46px; padding: 0; text-align: center; font-weight: 600; border-radius: 9px; background: #7f90c2; color: #d3d5da; box-shadow: 0 2px 6px rgba(110,130,190,.4); }
.detail-scroll { flex: 1; display: flex; min-height: 0; overflow: hidden; }
.detail-body { width: 1360px; margin-left: 29.500px; flex: none; }
.detail-track { width: 20px; height: 1324px; margin: 6px 0 0 35px; background: #c8c8c8; flex: none; }
.detail-thumb { height: 527px; }
.bar { width: 6px; height: 24px; border-radius: 2px; background: #7489c8; flex: none; }
.sec { display: flex; align-items: center; margin-top: 30px; margin-bottom: 14px; }
h3 { font-size: 20.300px; font-weight: 600; letter-spacing: 1.850px; color: #98a8cb; margin-left: 15px; }
.sec-usage { height: 36px; }
.expand { display: flex; align-items: center; gap: 13px; width: 190px; height: 36px; margin-left: 16px; padding-left: 15px; border: 1.500px solid #b6bfd0; border-radius: 15px; background: #c3c7ce; color: #93a5cc; font-size: 19.300px; letter-spacing: 0; }
.mode { margin-left: auto; font-size: 19.500px; font-weight: 600; color: #929292; letter-spacing: 0; }
.switch { width: 66px; height: 30px; margin-left: 10px; border-radius: 15px; background: #b8b8b8; padding: 2.500px 2px; display: flex; justify-content: flex-end; }
.switch i { width: 40px; height: 25px; border-radius: 13px; background: #cdcdcd; }
.card { border: 1.500px solid #bec3cd; border-radius: 14px; background: #c8c9cb; }
.charts { display: flex; gap: 30px; height: 465px; padding: 20.500px 21.500px; }
.chart-col { width: 642px; display: flex; flex-direction: column; gap: 11px; }
.chart-head { display: flex; align-items: center; height: 38px; }
.round-share { width: 51px; height: 39px; margin-left: 16px; background: #c0c4ce; }
.legend { display: flex; gap: 19px; margin-left: auto; margin-right: 89px; list-style: none; font-size: 19.200px; color: #949597; letter-spacing: 0; padding-top: 1px; }
.chart-col:first-child .legend { margin-right: 54px; }
.legend li { display: flex; align-items: center; gap: 8px; }
.legend li::before { content: ""; width: 22px; height: 4px; border-radius: 1px; background: #7d90c6; }
.legend .c-req::before { background: #8abb8c; }
.legend .c-lim::before { background: #cf8a84; }
.frame { fill: #c5c6cb; stroke: #bfc3cf; stroke-width: 1.200; }
.grid path { fill: none; stroke: #bec0c5; stroke-width: 1.200; }
.gridv { fill: none; stroke: #bfc1c6; stroke-width: 1.200; stroke-dasharray: 6 6; }
.l-lim, .l-req, .l-used { fill: none; stroke-width: 3.200; }
.l-lim { stroke: #d08f8a; } .l-req { stroke: #90bb92; } .l-used { stroke: #7e90c8; }
.ylab text { font-size: 19.200px; fill: #a9aaad; letter-spacing: 0; }
.xlab text { font-size: 19px; fill: #a1b2cf; letter-spacing: 0; }
.stats { display: flex; width: 539px; height: 102px; margin-left: 7px; padding: 8px 0; border: 1.500px solid #bdc2ce; border-radius: 12px; background: #c4c5cb; }
.stats > div { width: 180.500px; flex: none; padding: 3px 0 0 18px; border-left: 1.500px solid #b9bbc2; display: flex; flex-direction: column; }
.stats > div:first-child { border-left: 0; }
.stats-cpu { width: 574px; }
.stats-cpu > div { width: 191.500px; }
.stats h4 { font-size: 17.500px; font-weight: 600; letter-spacing: 1px; line-height: 24px; }
.stats b, .limits b { font-family: "DejaVu Sans Mono", "Liberation Mono", monospace; font-weight: 400; font-size: 22.700px; letter-spacing: 0; line-height: 30px; color: #707173; }
.stats b { margin-top: -1px; }
.stats small { font-size: 19px; line-height: 27px; color: #929396; }
.t-used { color: #7d90c6; } .t-req { color: #8bb98d; } .t-lim { color: #cf8a86; }
.sec-status { height: 39px; }
.round-status { width: 47px; height: 39px; margin-left: auto; }
.counts { display: flex; height: 134px; padding: 14px 0; }
.counts > div { flex: 1; display: flex; flex-direction: column; align-items: center; border-left: 1.500px solid #bdbfc3; }
.counts > div:first-child { border-left: 0; }
.counts b { font-size: 40px; font-weight: 700; line-height: 46px; margin-top: 13px; color: #949596; letter-spacing: 0; }
.counts .n-orange { color: #cfa177; } .counts .n-green { color: #8abb8c; }
.counts span { font-size: 19.300px; font-weight: 500; letter-spacing: .8px; line-height: 26px; margin-top: 9px; color: #949596; }
.sec-containers { height: 25px; }
.container-card { height: 448px; padding: 113px 21.500px 0; }
.port { display: flex; align-items: center; height: 66px; padding-left: 17px; border: 1.500px solid #bcc0cc; border-radius: 12px; background: #c2c3c9; }
.port b { font-family: "DejaVu Sans Mono", "Liberation Mono", monospace; font-size: 18.700px; letter-spacing: 0; color: #6e6f72; width: 61px; padding-top: 1px; }
.tcp { width: 53px; height: 28px; line-height: 28px; text-align: center; border-radius: 6px; background: #babfcb; color: #a0b0cf; font-size: 18.500px; font-weight: 500; letter-spacing: 0; }
.round-swap { width: 44px; height: 35px; margin-left: 15px; }
.round-port { width: 46px; height: 36px; margin-left: 16px; }
.port .round { background: #b5bbca; border-color: #a9b3cd; color: #8095c4; }
.limits { margin-top: 10px; height: 224px; border: 1.500px solid #bdc1cc; border-radius: 12px; overflow: hidden; }
.limits-head, .limits-row { display: grid; grid-template-columns: 1fr 200px 140px; padding-right: 18px; text-align: right; }
.limits-head { height: 48px; line-height: 46px; background: #c2c3c9; border-bottom: 1.500px solid #b6bbc4; color: #94a5cb; font-size: 20.300px; font-weight: 600; letter-spacing: 0; }
.limits-row { height: 88px; padding-top: 17px; }
.limits-head + .limits-row { padding-top: 8px; border-top: 8px solid #c3c4ca; border-bottom: 1.500px solid #b9babd; }
.limits-row > span { display: flex; flex-direction: column; align-items: flex-end; }
.limits-row > .res { flex-direction: row; align-items: center; height: 55px; padding-left: 18px; gap: 18px; font-size: 23.500px; color: #939496; }
.limits small { font-family: "DejaVu Sans Mono", "Liberation Mono", monospace; font-size: 18.700px; line-height: 24px; letter-spacing: 0; color: #959698; }
.sec-pods { height: 25px; margin-bottom: 16px; }
.pods-card { height: 60px; padding: 13px 122px 0 0; display: flex; justify-content: flex-end; }
.pods-card em { width: 98px; height: 33px; border: 1.500px solid #b5c6be; border-radius: 12px; background: #c3cbc8; }

/* modal */
.modal { position: absolute; left: 1152px; top: 492px; width: 888px; height: 850px; border-radius: 52px; background: #fff; box-shadow: 0 0 0 1px rgba(0,0,0,.3), 0 36px 76px rgba(0,0,0,.32); overflow: hidden; color: #848588; }
.modal-head { display: flex; align-items: center; justify-content: space-between; height: 130px; padding: 0 33px 0 30px; border-bottom: 2px solid #e9e9ec; background: linear-gradient(100deg, #eff2fe, #f9faff 50%, #fff 90%); }
.modal-head h2 { font-size: 27.600px; font-weight: 600; color: #262729; line-height: 34px; letter-spacing: -.005em; }
.modal-head p { font-size: 22.200px; line-height: 28px; margin-top: 5px; letter-spacing: 0; }
.modal-head div { padding-top: 1px; }
.modal-close { color: #7f7f80; --x: #fff; }
.modal-sec { display: flex; align-items: center; height: 24px; margin: 30px 0 16px 30px; }
.modal-sec i { width: 5px; height: 24px; border-radius: 2px; background: #3c66e1; }
.modal-sec h3 { color: #75a0ea; font-size: 20px; letter-spacing: 1.950px; padding-top: 1px; }
.custom-sec { margin-top: 38px; }
.modal-card { margin: 0 30px; border: 1.500px solid #dfe8fa; border-radius: 14px; background: #f3f6fe; display: flex; align-items: center; padding: 0 25px; font-size: 19px; letter-spacing: 0; }
.declared { height: 94px; justify-content: space-between; }
.modal button { width: 123px; height: 43px; border: 0; border-radius: 10px; background: #3c66e1; color: #fff; font: 500 22.800px Inter, "Liberation Sans", sans-serif; letter-spacing: -.02em; }
.custom { height: 131px; align-items: flex-start; padding-top: 25px; }
.custom label { display: flex; flex-direction: column; gap: 7px; line-height: 25px; }
.input { width: 214px; height: 48px; line-height: 46px; padding-left: 18px; border: 1.500px solid #e6e8ee; border-radius: 9px; background: #fff; color: #262729; font-size: 24px; letter-spacing: -.01em; }
.custom .swap { margin: 42px 24px 0 25px; }
.modal .start { width: 89px; margin: 35px 0 0 auto; }
```
